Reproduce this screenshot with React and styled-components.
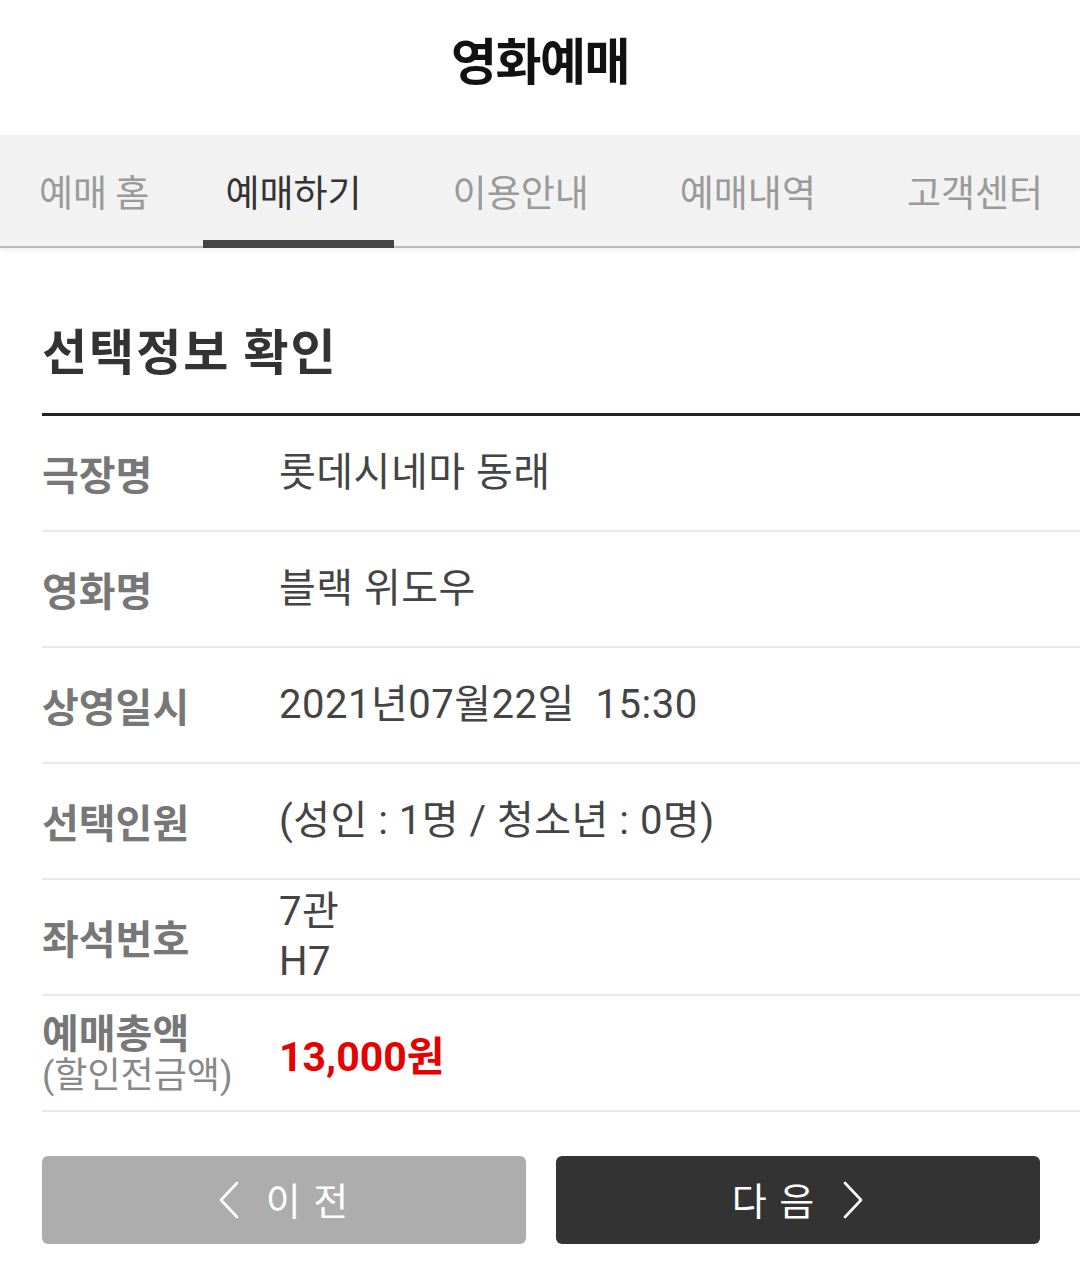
import styled, { createGlobalStyle } from 'styled-components';

const GlobalStyle = createGlobalStyle`
  body {
    margin: 0;
    background: #fff;
    font-family: Roboto, "Noto Sans CJK KR", sans-serif;
  }
`;

const tabs = ['예매 홈', '예매하기', '이용안내', '예매내역', '고객센터'];

const rows = [
  { label: '극장명', value: '롯데시네마 동래' },
  { label: '영화명', value: '블랙 위도우' },
  { label: '상영일시', value: '2021년07월22일\u00a0\u00a015:30' },
  { label: '선택인원', value: '(성인 : 1명 / 청소년 : 0명)' },
  { label: '좌석번호', value: ['7관', 'H7'] },
];

const Chevron = ({ dir }) => (
  <svg width="22" height="38" viewBox="0 0 22 38" fill="none">
    <polyline
      points={dir === 'left' ? '19,2 3,19 19,36' : '3,2 19,19 3,36'}
      stroke="#fff"
      strokeWidth="2.6"
      strokeLinejoin="round"
      strokeLinecap="round"
    />
  </svg>
);

const App = () => {
  return (
    <>
      <GlobalStyle />
      <StyledPage>
        <StyledHeader>
          <h1>영화예매</h1>
        </StyledHeader>
        <StyledTabBar>
          {tabs.map((t, i) => (
            <StyledTab key={t} active={i === 1}>
              {t}
            </StyledTab>
          ))}
        </StyledTabBar>
        <StyledContent>
          <StyledSectionTitle>선택정보 확인</StyledSectionTitle>
          <StyledTable>
            {rows.map((r) => (
              <StyledRow key={r.label}>
                <StyledLabel>{r.label}</StyledLabel>
                <StyledValue>
                  {Array.isArray(r.value)
                    ? r.value.map((v) => <div key={v}>{v}</div>)
                    : r.value}
                </StyledValue>
              </StyledRow>
            ))}
            <StyledRow>
              <StyledLabel>
                예매총액
                <sub>(할인전금액)</sub>
              </StyledLabel>
              <StyledPrice>13,000원</StyledPrice>
            </StyledRow>
          </StyledTable>
          <StyledButtons>
            <StyledButton variant="prev">
              <Chevron dir="left" />
              <span>이 전</span>
            </StyledButton>
            <StyledButton variant="next">
              <span>다 음</span>
              <Chevron dir="right" />
            </StyledButton>
          </StyledButtons>
        </StyledContent>
      </StyledPage>
    </>
  );
};

const StyledPage = styled.div`
  width: 1080px;
  min-height: 1279px;
  background: #fff;
`;

const StyledHeader = styled.header`
  height: 135px;
  display: flex;
  align-items: center;
  justify-content: center;
  h1 {
    margin: 0 0 20px;
    font-family: "Noto Sans CJK KR", sans-serif;
    font-size: 50px;
    font-weight: 700;
    letter-spacing: -1.5px;
    color: #111;
  }
`;

const StyledTabBar = styled.nav`
  height: 113px;
  background: #f2f2f2;
  border-bottom: 2px solid #bcbcbc;
  box-shadow: 0 3px 4px rgba(0, 0, 0, 0.06);
  display: flex;
  align-items: stretch;
  gap: 37px;
  padding-left: 17px;
  box-sizing: border-box;
`;

const StyledTab = styled.div`
  position: relative;
  display: flex;
  align-items: center;
  padding: 0 32px 0 22px;
  font-family: "Noto Sans CJK KR", sans-serif;
  font-size: 37px;
  white-space: nowrap;
  color: ${({ active }) => (active ? '#333' : '#9a9a9a')};
  &:first-child {
    margin-right: -15px;
  }
  &::after {
    content: '';
    display: ${({ active }) => (active ? 'block' : 'none')};
    position: absolute;
    left: 0;
    right: 0;
    bottom: -2px;
    height: 8px;
    background: #444;
  }
`;

const StyledContent = styled.main`
  padding-left: 42px;
`;

const StyledSectionTitle = styled.h2`
  margin: 0;
  padding: 67px 0 30px;
  font-family: "Noto Sans CJK KR", sans-serif;
  font-size: 49px;
  font-weight: 700;
  line-height: 68px;
  letter-spacing: 2px;
  color: #333;
  border-bottom: 3px solid #222;
`;

const StyledTable = styled.section`
  display: flex;
  flex-direction: column;
`;

const StyledRow = styled.div`
  height: 114px;
  display: grid;
  grid-template-columns: 237px 1fr;
  align-items: center;
  border-bottom: 2px solid #e8e8e8;
`;

const StyledLabel = styled.div`
  font-family: "Noto Sans CJK KR", sans-serif;
  font-size: 40px;
  font-weight: 700;
  color: #777;
  line-height: 46px;
  sub {
    display: block;
    font-family: Roboto, "Noto Sans CJK KR", sans-serif;
    font-size: 36px;
    font-weight: 400;
    color: #888;
    vertical-align: baseline;
    line-height: 44px;
  }
`;

const StyledValue = styled.div`
  font-size: 40px;
  color: #444;
  line-height: 50px;
  letter-spacing: 0.5px;
`;

const StyledPrice = styled.div`
  font-size: 41px;
  font-weight: 700;
  color: #e60000;
`;

const StyledButtons = styled.div`
  display: grid;
  grid-template-columns: 1fr 1fr;
  gap: 30px;
  padding: 44px 40px 36px 0;
`;

const StyledButton = styled.button`
  height: 88px;
  border: none;
  border-radius: 6px;
  background: ${({ variant }) => (variant === 'prev' ? '#adadad' : '#333')};
  color: #fff;
  display: flex;
  align-items: center;
  justify-content: center;
  gap: 26px;
  font-family: "Noto Sans CJK KR", sans-serif;
  font-size: 38px;
  letter-spacing: 2px;
  span {
    margin-top: -4px;
  }
`;

export default App;
